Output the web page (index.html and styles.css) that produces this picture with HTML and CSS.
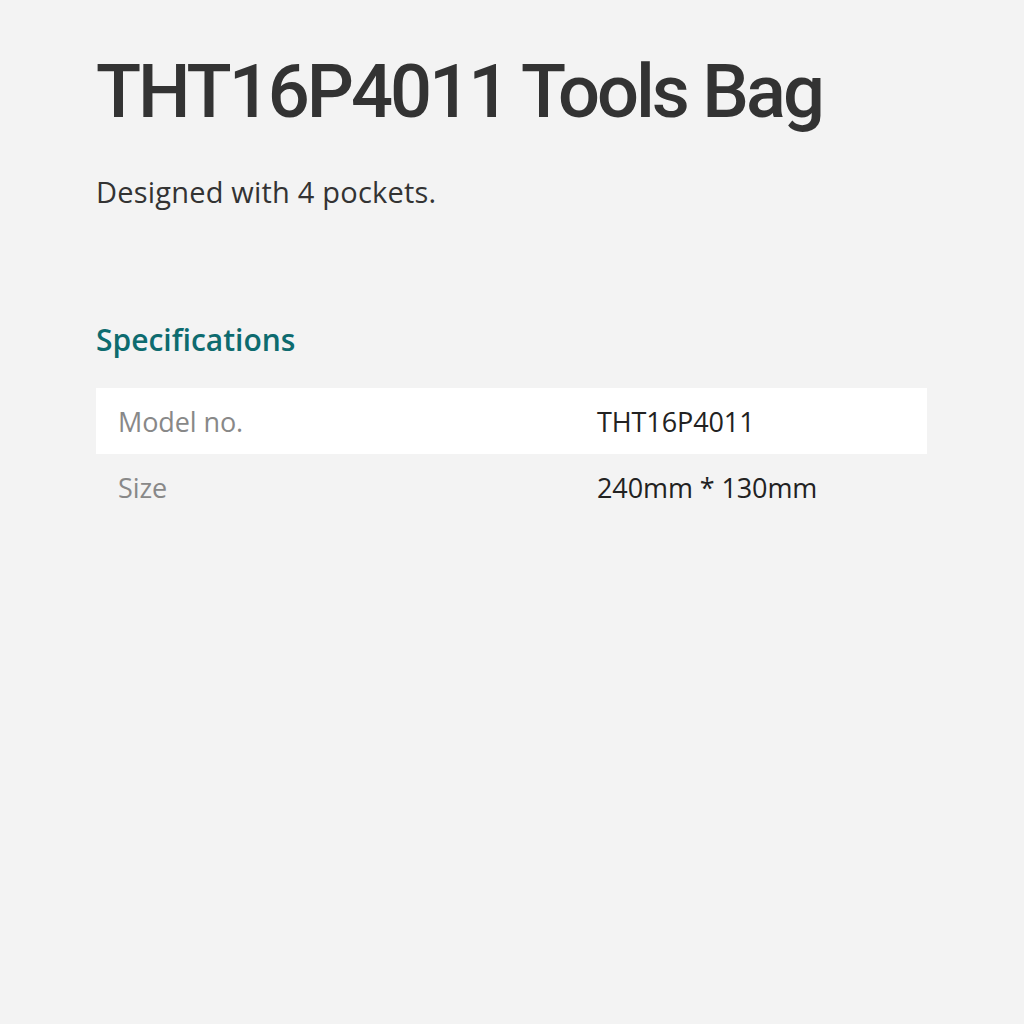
FILE: index.html
```html
<!DOCTYPE html>
<html lang="en">
<head>
<meta charset="utf-8">
<title>THT16P4011 Tools Bag</title>
<link rel="stylesheet" href="styles.css">
</head>
<body>
<main class="product">
  <h1 class="title">THT16P4011 Tools Bag</h1>
  <p class="desc">Designed with 4 pockets.</p>
  <h2 class="spec-heading">Specifications</h2>
  <div class="spec-table">
    <div class="spec-row odd">
      <div class="spec-label">Model no.</div>
      <div class="spec-value">THT16P4011</div>
    </div>
    <div class="spec-row">
      <div class="spec-label">Size</div>
      <div class="spec-value">240mm * 130mm</div>
    </div>
  </div>
</main>
</body>
</html>
```
FILE: styles.css
```css
html, body {
  margin: 0;
  padding: 0;
  background: #f3f3f3;
}
body {
  font-family: "Open Sans", sans-serif;
  color: #333;
}
.product {
  padding: 47px 97px 0 96px;
  display: flex;
  flex-direction: column;
}
.title {
  margin: 0;
  font-family: Roboto, sans-serif;
  font-weight: 500;
  font-size: 74px;
  line-height: 90px;
  color: #333;
  letter-spacing: -3px;
}
.desc {
  margin: 36px 0 0;
  font-size: 29px;
  line-height: 38px;
  color: #333;
  letter-spacing: 0.2px;
}
.spec-heading {
  margin: 109px 0 0;
  font-size: 30px;
  line-height: 40px;
  font-weight: 600;
  color: #0d6b6f;
  letter-spacing: 0;
}
.spec-table {
  margin-top: 28px;
  display: flex;
  flex-direction: column;
}
.spec-row {
  display: grid;
  grid-template-columns: 479px 1fr;
  height: 66px;
  align-items: center;
  padding-left: 22px;
  font-size: 27px;
  letter-spacing: -0.1px;
}
.spec-row.odd {
  background: #fff;
}
.spec-label {
  color: #888;
}
.spec-value {
  color: #222;
}
```
